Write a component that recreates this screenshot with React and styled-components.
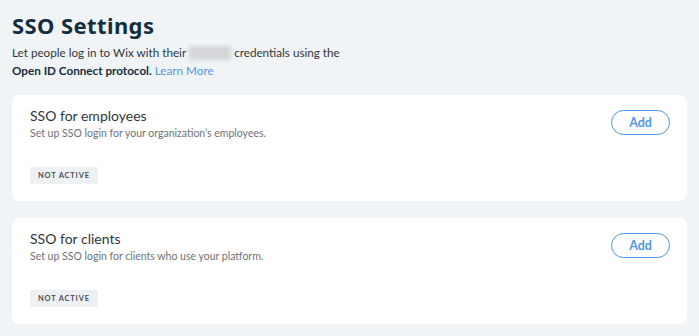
import React from "react";
import styled, { createGlobalStyle } from "styled-components";

const Global = createGlobalStyle`
  html, body {
    margin: 0;
    padding: 0;
    background: #f0f4f7;
    font-family: Lato, "Noto Sans", sans-serif;
  }
`;

const Page = styled.div`
  padding: 11px 12px 12px 12px;
  display: flex;
  flex-direction: column;
`;

const Title = styled.h1`
  margin: 0;
  font-family: "Noto Sans", sans-serif;
  font-size: 22px;
  letter-spacing: 0.4px;
  line-height: 28px;
  font-weight: 700;
  color: #162d3d;
`;

const Intro = styled.p`
  margin: 4px 0 0 0;
  font-size: 11.7px;
  line-height: 18px;
  color: #32363a;
  b {
    font-weight: 700;
    color: #162d3d;
  }
`;

const Hidden = styled.span`
  display: inline-block;
  width: 42px;
  height: 14px;
  margin: 0 3px;
  vertical-align: -3px;
  background: #d4d6d9;
  filter: blur(2px);
`;

const Link = styled.a`
  color: #4d98e6;
  text-decoration: none;
`;

const List = styled.div`
  display: flex;
  flex-direction: column;
  gap: 17px;
  margin-top: 16px;
`;

const Card = styled.section`
  background: #fff;
  border-radius: 7px;
  padding: 12px 17px 16px 18px;
  display: flex;
  justify-content: space-between;
  align-items: flex-start;
  height: 106px;
  box-sizing: border-box;
`;

const Info = styled.div`
  display: flex;
  flex-direction: column;
  align-items: flex-start;
`;

const CardTitle = styled.h2`
  margin: 0;
  font-size: 14px;
  line-height: 18px;
  font-weight: 400;
  color: #32363a;
`;

const CardText = styled.p`
  margin: 0;
  font-size: 10.5px;
  line-height: 16px;
  color: #6e7278;
`;

const Badge = styled.span`
  margin-top: 26px;
  background: #eef1f4;
  color: #4a4d52;
  font-size: 7.5px;
  font-weight: 700;
  letter-spacing: 0.8px;
  padding: 0 8px;
  height: 17px;
  line-height: 17px;
  border-radius: 2px;
`;

const AddButton = styled.button`
  margin-top: 3px;
  width: 59px;
  height: 25px;
  border: 1px solid #4d98e6;
  border-radius: 13px;
  background: #fff;
  color: #4d98e6;
  font-family: inherit;
  font-size: 12.5px;
  font-weight: 700;
  cursor: pointer;
  padding: 0;
`;

const cards = [
  {
    title: "SSO for employees",
    text: "Set up SSO login for your organization’s employees.",
  },
  {
    title: "SSO for clients",
    text: "Set up SSO login for clients who use your platform.",
  },
];

export default function App() {
  return (
    <>
      <Global />
      <Page>
        <Title>SSO Settings</Title>
        <Intro>
          Let people log in to Wix with their<Hidden />credentials using the
          <br />
          <b>Open ID Connect protocol.</b> <Link href="#">Learn More</Link>
        </Intro>
        <List>
          {cards.map((c) => (
            <Card key={c.title}>
              <Info>
                <CardTitle>{c.title}</CardTitle>
                <CardText>{c.text}</CardText>
                <Badge>NOT ACTIVE</Badge>
              </Info>
              <AddButton>Add</AddButton>
            </Card>
          ))}
        </List>
      </Page>
    </>
  );
}
